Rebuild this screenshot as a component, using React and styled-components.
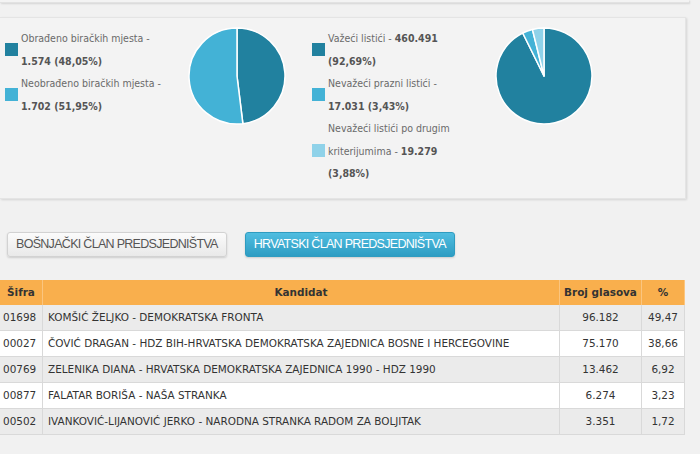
import React from 'react';
import styled, { createGlobalStyle } from 'styled-components';

const GlobalStyle = createGlobalStyle`
    body {
        margin: 0;
        background-color: #f1f1f1;
        font-family: "DejaVu Sans Condensed", "DejaVu Sans", Verdana, sans-serif;
    }
`

const Page = styled.div`
    width: 686px;
`

const PrevPanel = styled.div`
    width: 689px;
    height: 2px;
    background-color: #f3f3f3;
    border-bottom: 1px solid #e2e2e2;
    box-shadow: 1px 1px 2px rgba(0, 0, 0, 0.12);
    margin-bottom: 14px;
`

const StatsPanel = styled.div`
    display: flex;
    align-items: flex-start;
    background-color: #f3f3f3;
    border: 1px solid #e4e4e4;
    border-left: none;
    box-shadow: 1px 1px 2px rgba(0, 0, 0, 0.12);
    padding: 9px 0 13px 5px;
`

const Legend = styled.div`
    width: ${props => props.width}px;
    display: flex;
    flex-direction: column;
`

const LegendItem = styled.div`
    display: flex;
    align-items: center;
    font-size: 10.5px;
    line-height: 22.5px;
    color: #6a6a6a;

    & b {
        color: #555;
    }
`

const Swatch = styled.span`
    flex: none;
    width: 13px;
    height: 13px;
    margin-right: 3px;
    background-color: ${props => props.color};
`

const PieBox = styled.div`
    width: 98px;
    height: 98px;
    margin-right: ${props => props.gap || 0}px;
`

const Buttons = styled.div`
    display: flex;
    gap: 18px;
    padding: 33px 0 0 7px;
    margin-bottom: 23px;
`

const TabButton = styled.button`
    height: 25px;
    padding: 0 8px;
    font-family: "Liberation Sans", Arial, sans-serif;
    font-size: 12.5px;
    letter-spacing: -0.7px;
    border-radius: 3px;
    cursor: pointer;
    color: ${props => props.active ? '#fff' : '#555'};
    border: 1px solid ${props => props.active ? '#2f9cc0' : '#d2d2d2'};
    background: ${props => props.active
        ? 'linear-gradient(#50bde0, #2e9dc3)'
        : 'linear-gradient(#fbfbfb, #e9e9e9)'};
    box-shadow: 0 1px 2px rgba(0, 0, 0, 0.15);
`

const Table = styled.table`
    width: 685px;
    border-collapse: collapse;
    font-family: "DejaVu Sans", Verdana, sans-serif;
    font-size: 10.45px;
    color: #333;

    & th {
        background-color: #f9af4d;
        height: 25px;
        font-weight: bold;
        border-right: 1px solid #fbc57f;
        padding: 0;
    }

    & td {
        height: 25px;
        border-right: 1px solid #d9d9d9;
        border-bottom: 1px solid #d9d9d9;
        padding: 0 5px;
    }

    & tr:nth-child(odd) td {
        background-color: #ebebeb;
    }

    & tr:nth-child(even) td {
        background-color: #fff;
    }

    & td.num {
        text-align: center;
    }

    & td.code {
        padding: 0 0 0 3px;
    }
`

const slicePath = (cx, cy, r, from, to) => {
    const a0 = from * 2 * Math.PI - Math.PI / 2;
    const a1 = to * 2 * Math.PI - Math.PI / 2;
    const x0 = cx + r * Math.cos(a0);
    const y0 = cy + r * Math.sin(a0);
    const x1 = cx + r * Math.cos(a1);
    const y1 = cy + r * Math.sin(a1);
    const large = to - from > 0.5 ? 1 : 0;
    return `M${cx},${cy} L${x0},${y0} A${r},${r} 0 ${large} 1 ${x1},${y1} Z`;
}

const Pie = ({data, gap}) => {
    let acc = 0;
    return (
        <PieBox gap={gap}>
            <svg width="98" height="98" viewBox="0 0 98 98">
                {data.map((d, i) => {
                    const from = acc;
                    acc += d.value;
                    return <path key={i} d={slicePath(49, 49, 48, from, acc)} fill={d.color} stroke="#fff" strokeWidth="1.5" strokeLinejoin="round"/>;
                })}
            </svg>
        </PieBox>
    );
}

const DARK = '#21819f';
const MID = '#43b2d6';
const LIGHT = '#8fd2e9';

const rows = [
    ['01698', 'KOMŠIĆ ŽELJKO - DEMOKRATSKA FRONTA', '96.182', '49,47'],
    ['00027', 'ČOVIĆ DRAGAN - HDZ BIH-HRVATSKA DEMOKRATSKA ZAJEDNICA BOSNE I HERCEGOVINE', '75.170', '38,66'],
    ['00769', 'ZELENIKA DIANA - HRVATSKA DEMOKRATSKA ZAJEDNICA 1990 - HDZ 1990', '13.462', '6,92'],
    ['00877', 'FALATAR BORIŠA - NAŠA STRANKA', '6.274', '3,23'],
    ['00502', 'IVANKOVIĆ-LIJANOVIĆ JERKO - NARODNA STRANKA RADOM ZA BOLJITAK', '3.351', '1,72'],
];

const App = () => {
    return (
        <Page>
            <GlobalStyle/>
            <PrevPanel/>
            <StatsPanel>
                <Legend width={183}>
                    <LegendItem>
                        <Swatch color={DARK}/>
                        <div>Obrađeno biračkih mjesta -<br/><b>1.574 (48,05%)</b></div>
                    </LegendItem>
                    <LegendItem>
                        <Swatch color={MID}/>
                        <div>Neobrađeno biračkih mjesta -<br/><b>1.702 (51,95%)</b></div>
                    </LegendItem>
                </Legend>
                <Pie gap={26} data={[{value: 0.4805, color: DARK}, {value: 0.5195, color: MID}]}/>
                <Legend width={183}>
                    <LegendItem>
                        <Swatch color={DARK}/>
                        <div>Važeći listići - <b>460.491</b><br/><b>(92,69%)</b></div>
                    </LegendItem>
                    <LegendItem>
                        <Swatch color={MID}/>
                        <div>Nevažeći prazni listići -<br/><b>17.031 (3,43%)</b></div>
                    </LegendItem>
                    <LegendItem>
                        <Swatch color={LIGHT}/>
                        <div>Nevažeći listići po drugim<br/>kriterijumima - <b>19.279</b><br/><b>(3,88%)</b></div>
                    </LegendItem>
                </Legend>
                <Pie data={[{value: 0.9269, color: DARK}, {value: 0.0343, color: MID}, {value: 0.0388, color: LIGHT}]}/>
            </StatsPanel>
            <Buttons>
                <TabButton>BOŠNJAČKI ČLAN PREDSJEDNIŠTVA</TabButton>
                <TabButton active>HRVATSKI ČLAN PREDSJEDNIŠTVA</TabButton>
            </Buttons>
            <Table>
                <thead>
                    <tr>
                        <th style={{width: 42}}>Šifra</th>
                        <th>Kandidat</th>
                        <th style={{width: 81}}>Broj glasova</th>
                        <th style={{width: 42}}>%</th>
                    </tr>
                </thead>
                <tbody>
                    {rows.map(r => (
                        <tr key={r[0]}>
                            <td className='code'>{r[0]}</td>
                            <td>{r[1]}</td>
                            <td className='num'>{r[2]}</td>
                            <td className='num'>{r[3]}</td>
                        </tr>
                    ))}
                </tbody>
            </Table>
        </Page>
    );
}

export default App;
